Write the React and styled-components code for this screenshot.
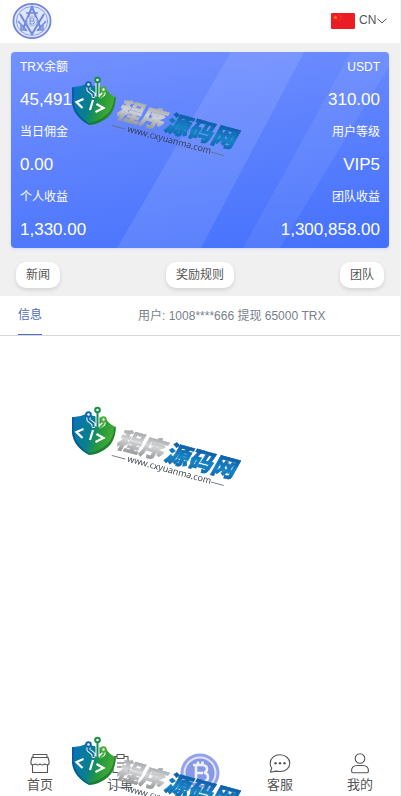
import styled, { createGlobalStyle } from "styled-components";

const GlobalStyle = createGlobalStyle`
  * {
    box-sizing: border-box;
  }
  body {
    margin: 0;
    background: #fff;
    color: #555;
    font-family: "Liberation Sans", "Noto Sans CJK SC", sans-serif;
    font-size: 12px;
  }
  button, select {
    font: inherit;
    color: inherit;
  }
`;
const Page = styled.div`
  display: flex;
  flex-direction: column;
  min-height: 100vh;
  border-right: 1px solid #f4f4f4;
`;
const Header = styled.header`
  display: flex;
  align-items: center;
  justify-content: space-between;
  height: 43px;
  padding: 0 13px 2px 12px;
`;
const Language = styled.label`
  display: flex;
  align-items: center;
`;
const LanguageSelect = styled.select`
  appearance: none;
  width: 18px;
  margin-left: 4px;
  padding: 0 0 2px;
  border: 0;
  background: none;
`;
const Wallet = styled.section`
  padding: 9px 11px 8px;
  background: #f0f0f1;
`;
const Card = styled.div`
  display: grid;
  position: relative;
  overflow: hidden;
  padding-bottom: 1px;
  border-radius: 4px;
  background: linear-gradient(170deg, #7491ff, #4370fc);
  box-shadow: 0 1px 3px #cfdcf8;
  color: #fff;
`;
const Shine = styled.svg`
  position: absolute;
  inset: 0;
  width: 100%;
  height: 100%;
`;
const Stats = styled.dl`
  display: grid;
  grid-template-columns: 1fr 1fr;
  position: relative;
  margin: 0;
  padding: 0 9px;
`;
const Stat = styled.div`
  text-align: ${(props) => (props.$right ? "right" : "left")};
`;
const Label = styled.dt`
  line-height: 30px;
`;
const Value = styled.dd`
  margin: 0;
  font-size: 17px;
  line-height: 35px;
`;
const Actions = styled.div`
  display: flex;
  justify-content: space-between;
  padding: 14px 5px 0;
`;
const Pill = styled.button`
  height: 26px;
  padding: 0 10px 4px;
  border: 0;
  border-radius: 10px;
  background: #fff;
  box-shadow: 0 2px 4px rgba(0, 0, 0, 0.12);
  cursor: pointer;
`;
const News = styled.div`
  display: flex;
  gap: 96px;
  height: 40px;
  padding: 0 18px;
  border-bottom: 1px solid #d8d8d8;
`;
const NewsTab = styled.button`
  padding: 0 0 3px;
  border: 0;
  border-bottom: 1px solid #4a6ed0;
  background: none;
  color: #4b6cba;
  white-space: nowrap;
`;
const Message = styled.p`
  margin: 0;
  color: #777f8b;
  line-height: 40px;
  white-space: nowrap;
`;
const TabBar = styled.nav`
  display: flex;
  position: sticky;
  bottom: 0;
  height: 50px;
  margin-top: auto;
  background: #fff;
`;
const TabLink = styled.a`
  display: flex;
  flex: 1;
  flex-direction: column;
  align-items: center;
  gap: 2px;
  padding-top: 7px;
  color: inherit;
  font-size: 13px;
  line-height: 18px;
  text-decoration: none;
`;
const Watermarks = styled.div`
  display: flex;
  flex-direction: column;
  gap: 246px;
  position: fixed;
  inset: 0;
  overflow: hidden;
  padding: 74px 0 0 68px;
  pointer-events: none;

  svg {
    flex: none;
  }
`;

const stats = [
  ["TRX余额", "45,491"],
  ["USDT", "310.00"],
  ["当日佣金", "0.00"],
  ["用户等级", "VIP5"],
  ["个人收益", "1,330.00"],
  ["团队收益", "1,300,858.00"],
];

function Logo() {
  return (
    <svg width="40" height="38" viewBox="0 0 40 38" fill="none" stroke="#7089df" aria-label="logo">
      <ellipse cx="20" cy="19" rx="18.6" ry="17.2" fill="#dfe6fb" strokeWidth="1.8" />
      <ellipse cx="20" cy="19" rx="15.6" ry="14.4" stroke="#8ca0e6" />
      <path d="M8 12 20 32 32 12M11 27 20 5l9 22" strokeWidth="2" />
      <path d="M6 19l9 10M34 19l-9 10M14 11h12" strokeWidth="1.5" />
      <path d="M9 23v5h5M31 23v5h-5" strokeWidth="1.5" />
      <circle cx="20" cy="19" r="5" fill="#dfe6fb" stroke="#a3b3ec" />
      <path d="M18 16v6h2.500q2-.2 2-1.700 0-1.300-1.500-1.400 1-.3 1-1.400 0-1.500-1.700-1.500ZM18 19h3" strokeWidth="1" />
    </svg>
  );
}

function Flag() {
  return (
    <svg width="24" height="16" viewBox="0 0 24 16" aria-hidden="true">
      <rect width="24" height="16" rx="1" fill="#ec1c24" />
      <path d="m4.500 2 .6 1.800H7L5.500 4.900 6 6.700 4.500 5.600 3 6.700l.5-1.800L2 3.800h1.900Z" fill="#fb7a22" />
      <g fill="#f8602a">
        <circle cx="8.500" cy="2" r=".6" />
        <circle cx="10" cy="3.500" r=".6" />
        <circle cx="10" cy="5.500" r=".6" />
        <circle cx="8.500" cy="7" r=".6" />
      </g>
    </svg>
  );
}

function Chevron() {
  return (
    <svg width="10" height="6" viewBox="0 0 10 6" fill="none" stroke="#555" aria-hidden="true">
      <path d="m.5.8 4.500 4 4.500-4" />
    </svg>
  );
}

function TabIcon({ children }) {
  return (
    <svg width="22" height="21" viewBox="0 0 22 21" fill="none" stroke="#555" strokeWidth="1.100" strokeLinejoin="round" aria-hidden="true">
      {children}
    </svg>
  );
}

function ShopIcon() {
  return (
    <TabIcon>
      <path d="M4 1.500h14M4 1.500v3M18 1.500v3M3 4.500h16l1 3.500v3q-1.500 1.500-4.500 0-2.200 2-4.500 0-2.200 2-4.500 0-3 1.500-4.500 0V8ZM3.500 12v7.500h15V12" />
    </TabIcon>
  );
}

function OrderIcon() {
  return (
    <TabIcon>
      <path d="M8 3.500H4v16h15v-16h-4M8 1.500h7v4H8ZM8 10h7M8 14h7" />
    </TabIcon>
  );
}

function ChatIcon() {
  return (
    <TabIcon>
      <path d="M1.500 19.200 2.700 15Q1.200 13 1.200 10.200C1.200 5.300 5.500 1.800 11 1.800s9.800 3.700 9.800 8.400-4 8.300-9.800 8.300q-2.500 0-4-.4Z" />
      <g fill="#555" stroke="none">
        <circle cx="6.500" cy="10.300" r="1.200" />
        <circle cx="11" cy="10.300" r="1.200" />
        <circle cx="15.500" cy="10.300" r="1.200" />
      </g>
    </TabIcon>
  );
}

function UserIcon() {
  return (
    <TabIcon>
      <circle cx="11" cy="5.500" r="4.800" />
      <path d="M2.500 18q0-5.500 6-5.500h5q6 0 6 5.500 0 1.700-1.700 1.700H4.200q-1.700 0-1.700-1.700Z" />
    </TabIcon>
  );
}

function Coin() {
  return (
    <svg width="40" height="40" viewBox="0 0 40 40" aria-label="BTC">
      <circle cx="20" cy="20" r="19.500" fill="#95a3ec" />
      <circle cx="20" cy="20" r="15.500" fill="#8798e6" stroke="#dfe4fb" strokeWidth="2" />
      <path
        d="M13 12h9q5 .3 5 4 0 3-3 3.800 4 .7 4 4.200 0 4.500-6 4.500h-9M16 12v16.500M16 20h7M18 8.500V12M22.500 8.500V12M18 28.500V32M22.500 28.500V32"
        fill="none"
        stroke="#eef0fd"
        strokeWidth="2.600"
      />
    </svg>
  );
}

function Watermark({ id }) {
  return (
    <svg width="176" height="84" viewBox="0 0 176 84">
      <defs>
        <linearGradient id={`shield${id}`} x1="0" y1="0" x2="1" y2=".3">
          <stop offset=".1" stopColor="#0874b6" />
          <stop offset=".5" stopColor="#08808a" />
          <stop offset=".75" stopColor="#289b3a" />
          <stop offset="1" stopColor="#47ad35" />
        </linearGradient>
        <linearGradient id={`silver${id}`} x1="0" y1="0" x2="0" y2="1">
          <stop offset="0" stopColor="#85888a" />
          <stop offset=".5" stopColor="#d2d4d5" />
          <stop offset="1" stopColor="#808385" />
        </linearGradient>
        <linearGradient id={`blue${id}`} x1="0" y1="0" x2="0" y2="1">
          <stop offset=".1" stopColor="#0a4f9c" />
          <stop offset=".6" stopColor="#1583c4" />
          <stop offset="1" stopColor="#0b5fa5" />
        </linearGradient>
      </defs>
      <path d="M4 13q7 .5 14-3l20 5q4 6 10 8-1 14-8 20-8 7-19 8Q6 43 4 29Z" fill={`url(#shield${id})`} />
      <path d="M5.500 27q2 14 15 22l1 2Q6 43 4 29V14h2Z" fill="#064a8a" opacity=".6" />
      <path d="M21 51q11-1 19-8 7-6 8-20l-2 1q-1 12-8 17-7 6-17 8Z" fill="#0d6b35" opacity=".6" />
      <g fill="none" strokeWidth="4" stroke="#fff" strokeLinecap="round" strokeLinejoin="round">
        <path d="M20.500 10v6l5 4v2M29.500 6v15M35.500 16v4l-3 2" />
      </g>
      <g fill="none" strokeWidth="2">
        <path d="M20.500 12v4l5 4v3" stroke="#0e67ae" />
        <path d="M29.500 8v15" stroke="#188a52" />
        <path d="M35.500 17v3l-3 3v2" stroke="#4bad32" />
        <circle cx="20.500" cy="10.500" r="2.300" fill="#fff" stroke="#0e67ae" />
        <circle cx="29.500" cy="6" r="2.300" fill="#fff" stroke="#178f45" />
        <circle cx="35.500" cy="15.500" r="2.200" fill="#fff" stroke="#4bad32" />
      </g>
      <path d="m15.500 25-7 3 6 6M25 26l-3 10M28.500 30l7 4-8 4" fill="none" stroke="#fff" strokeWidth="2.200" />
      <g transform="translate(47 43) rotate(15)">
        <g fontFamily="Noto Sans CJK SC, sans-serif" fontSize="24" fontWeight="900" fontStyle="italic">
          <text fill={`url(#silver${id})`} stroke={`url(#silver${id})`} strokeWidth=".6">
            程序
          </text>
          <text x="50" fill={`url(#blue${id})`} stroke={`url(#blue${id})`} strokeWidth=".6">
            源码网
          </text>
        </g>
        <text x="15" y="11" fontFamily="Open Sans, sans-serif" fontSize="9" fill="#333c48">
          www.cxyuanma.com
        </text>
        <path d="M-1 9h14M102 9h13" stroke="#666e78" strokeWidth=".8" />
      </g>
    </svg>
  );
}

export default function App() {
  return (
    <Page>
      <GlobalStyle />
      <Header>
        <Logo />
        <Language>
          <Flag />
          <LanguageSelect aria-label="Language">
            <option>CN</option>
            <option>EN</option>
          </LanguageSelect>
          <Chevron />
        </Language>
      </Header>

      <Wallet>
        <Card>
          <Shine viewBox="0 0 378 196" preserveAspectRatio="none" aria-hidden="true">
            <path d="M106 196 220 0h73L190 196Z" fill="#fff" opacity=".1" />
            <path d="M232 196 340 0h38v14L269 196Z" fill="#fff" opacity=".07" />
          </Shine>
          <Stats>
            {stats.map(([label, value], index) => (
              <Stat key={label} $right={index % 2 === 1}>
                <Label>{label}</Label>
                <Value>{value}</Value>
              </Stat>
            ))}
          </Stats>
        </Card>
        <Actions>
          <Pill>新闻</Pill>
          <Pill>奖励规则</Pill>
          <Pill>团队</Pill>
        </Actions>
      </Wallet>

      <News>
        <NewsTab>信息</NewsTab>
        <Message>用户: 1008****666 提现 65000 TRX</Message>
      </News>

      <TabBar>
        <TabLink href="#home">
          <ShopIcon />
          首页
        </TabLink>
        <TabLink href="#orders">
          <OrderIcon />
          订单
        </TabLink>
        <TabLink href="#trade">
          <Coin />
        </TabLink>
        <TabLink href="#support">
          <ChatIcon />
          客服
        </TabLink>
        <TabLink href="#me">
          <UserIcon />
          我的
        </TabLink>
      </TabBar>

      <Watermarks aria-hidden="true">
        <Watermark id="1" />
        <Watermark id="2" />
        <Watermark id="3" />
      </Watermarks>
    </Page>
  );
}
